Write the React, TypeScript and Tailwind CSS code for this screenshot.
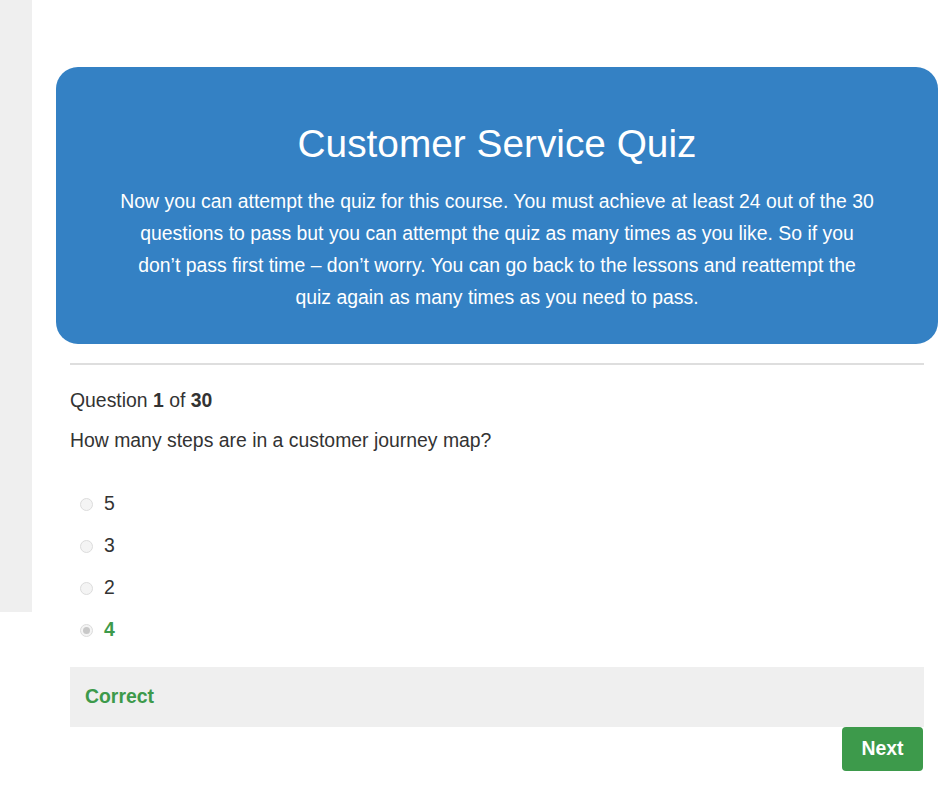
import React from "react";

const options = [
  { label: "5", checked: false },
  { label: "3", checked: false },
  { label: "2", checked: false },
  { label: "4", checked: true },
];

function Radio({ checked }: { checked: boolean }) {
  return (
    <span className="flex h-[13px] w-[13px] items-center justify-center rounded-full border border-[#dcdcdc] bg-[#f4f4f4]">
      {checked && <span className="h-[7px] w-[7px] rounded-full bg-[#c8c8c8]" />}
    </span>
  );
}

export default function App() {
  return (
    <div className="flex min-h-[788px] bg-white font-['Liberation_Sans',Arial,sans-serif] text-[#333]">
      <aside className="h-[612px] w-[32px] shrink-0 bg-[#efefef]" />
      <main className="flex-1">
        <div className="ml-[24px] mr-[2px] mt-[67px] rounded-[22px] bg-[#3481c4] px-16 pb-[31px] pt-[52px] text-center text-white">
          <h1 className="text-[38.8px] leading-[50px]">Customer Service Quiz</h1>
          <p className="mt-[16px] text-[19.4px] leading-[32px]">
            Now you can attempt the quiz for this course. You must achieve at least 24 out of the 30
            questions to pass but you can attempt the quiz as many times as you like. So if you
            don’t pass first time – don’t worry. You can go back to the lessons and reattempt the
            quiz again as many times as you need to pass.
          </p>
        </div>
        <div className="pl-[38px] pr-[16px]">
          <hr className="mt-[19px] border-t-2 border-[#dedede]" />
          <p className="mt-[22px] text-[19.4px] leading-[26px]">
            Question <b>1</b> of <b>30</b>
          </p>
          <p className="mt-[14px] text-[19.4px] leading-[26px]">
            How many steps are in a customer journey map?
          </p>
          <ul className="mt-[38px] flex flex-col gap-[16px]">
            {options.map((o) => (
              <li key={o.label} className="flex h-[26px] items-center">
                <span className="ml-[10px] mr-[11px]">
                  <Radio checked={o.checked} />
                </span>
                <span
                  className={
                    o.checked
                      ? "text-[19.4px] font-bold text-[#3d9a4b]"
                      : "text-[19.4px]"
                  }
                >
                  {o.label}
                </span>
              </li>
            ))}
          </ul>
          <div className="mt-[24px] flex h-[60px] items-center bg-[#efefef] px-[15px]">
            <span className="text-[19.4px] font-bold text-[#3d9a4b]">Correct</span>
          </div>
          <div className="flex justify-end">
            <button
              type="button"
              className="mr-[1px] h-[44px] w-[81px] rounded-[4px] bg-[#3d9a4b] text-[19.4px] font-bold text-white"
            >
              Next
            </button>
          </div>
        </div>
      </main>
    </div>
  );
}
